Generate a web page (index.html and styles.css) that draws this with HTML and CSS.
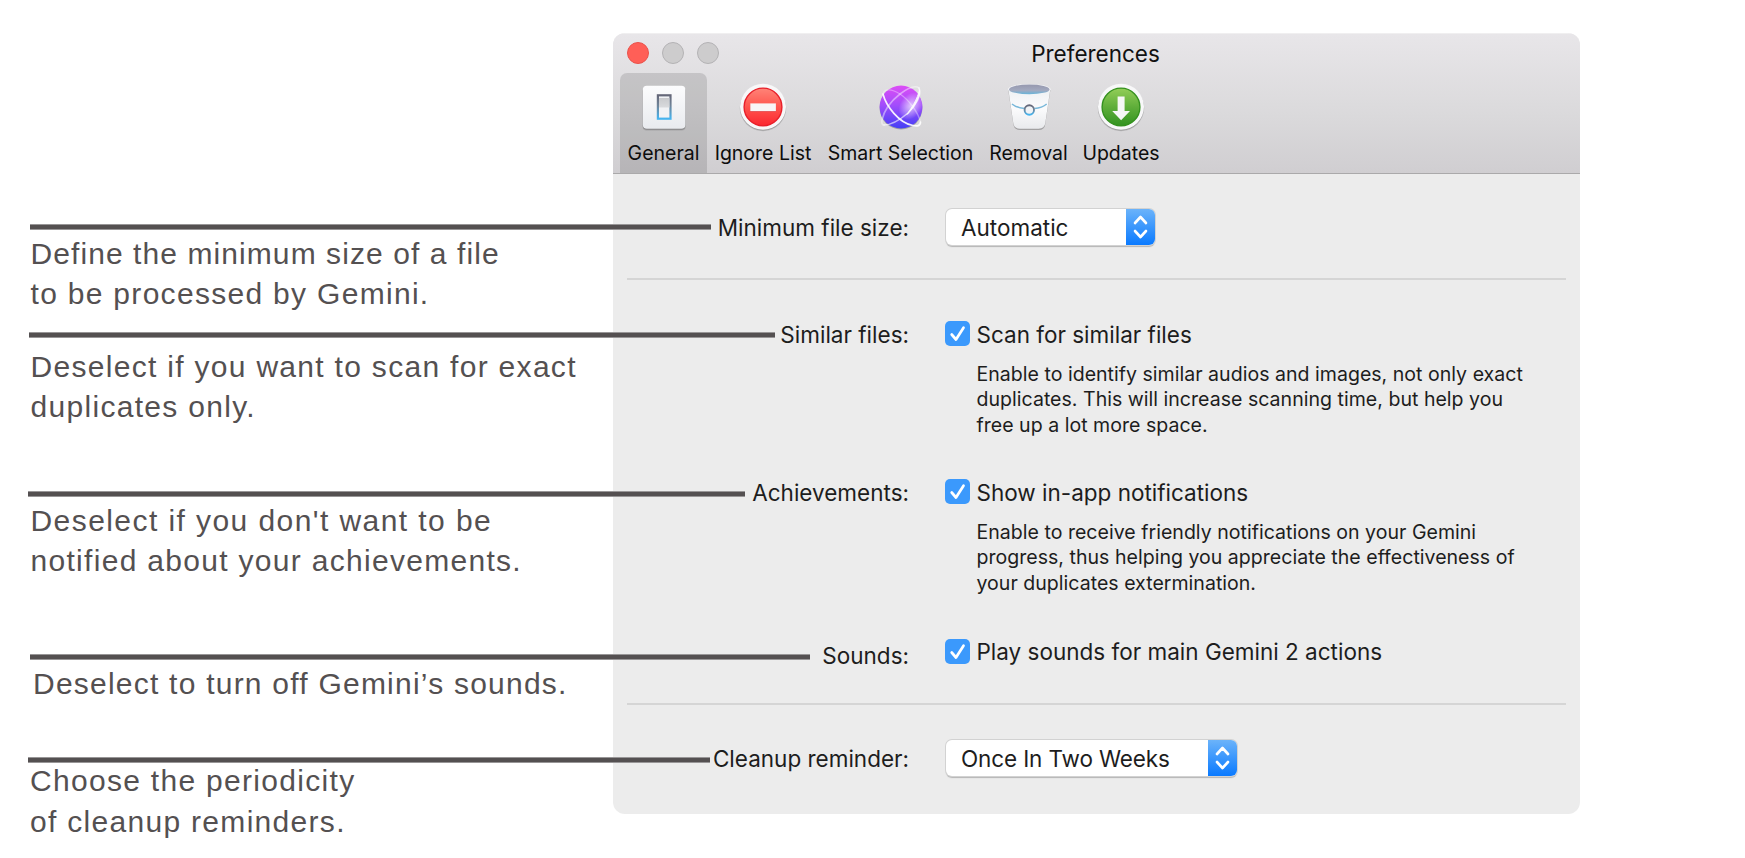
FILE: index.html
```html
<!DOCTYPE html>
<html lang="en">
<head>
<meta charset="utf-8">
<title>Preferences</title>
<link rel="stylesheet" href="styles.css">
</head>
<body>
<main class="stage">
  <aside class="callouts">
    <section class="callout"><div class="leader leader-size"></div><p class="note note-size"><span class="tight">Define the minimum size of a file</span><br>to be processed by Gemini.</p></section>
    <section class="callout"><div class="leader leader-similar"></div><p class="note note-similar">Deselect if you want to scan for exact<br>duplicates only.</p></section>
    <section class="callout"><div class="leader leader-achievements"></div><p class="note note-achievements"><span class="loose">Deselect if you don't want to be</span><br>notified about your achievements.</p></section>
    <section class="callout"><div class="leader leader-sounds"></div><p class="note note-sounds">Deselect to turn off Gemini’s sounds.</p></section>
    <section class="callout"><div class="leader leader-reminder"></div><p class="note note-reminder">Choose the periodicity<br>of cleanup reminders.</p></section>
  </aside>

  <div class="window">
    <header class="header">
      <div class="titlebar">
        <div class="lights"><i class="light close"></i><i class="light"></i><i class="light"></i></div>
        <h1 class="title">Preferences</h1>
      </div>
      <nav class="toolbar">
        <a class="tab tab-general active">
          <svg class="icon" viewBox="0 0 50 50">
            <defs>
              <linearGradient id="plate" x1="0" y1="0" x2="0" y2="1"><stop offset="0" stop-color="#fcfcfd"/><stop offset="1" stop-color="#e9ebef"/></linearGradient>
              <linearGradient id="rim" x1="0" y1="0" x2="0" y2="1"><stop offset="0" stop-color="#656778"/><stop offset=".45" stop-color="#6f8499"/><stop offset="1" stop-color="#45b4f0"/></linearGradient>
              <linearGradient id="rocker" x1="0" y1="0" x2="0" y2="1"><stop offset="0" stop-color="#c9cacd"/><stop offset="1" stop-color="#d9dadd"/></linearGradient>
            </defs>
            <rect x="3.6" y="5" width="43" height="43.6" rx="4" fill="#000" opacity=".13"/>
            <rect x="3.8" y="4.6" width="42.6" height="43" rx="4" fill="#000" opacity=".25"/>
            <rect x="3.8" y="3.7" width="42.6" height="43" rx="4" fill="url(#plate)"/>
            <rect x="18.9" y="13.3" width="12.6" height="23.4" fill="#f1f2f5" stroke="url(#rim)" stroke-width="2.2"/>
            <rect x="20" y="16" width="10.4" height="9.5" fill="url(#rocker)"/>
          </svg>
          <span class="tab-label">General</span>
        </a>
        <a class="tab tab-ignore">
          <svg class="icon" viewBox="0 0 50 50">
            <defs><linearGradient id="red" x1="0" y1="0" x2="0" y2="1"><stop offset="0" stop-color="#ff8478"/><stop offset=".5" stop-color="#ff544d"/><stop offset="1" stop-color="#fb2730"/></linearGradient></defs>
            <circle cx="25" cy="25.9" r="23.3" fill="#000" opacity=".12"/>
            <circle cx="25" cy="25.5" r="22.9" fill="#000" opacity=".22"/>
            <circle cx="25" cy="24.7" r="23" fill="#f8f8f9"/>
            <circle cx="25" cy="25" r="18.9" fill="url(#red)" stroke="#e8202b" stroke-width="1.4"/>
            <rect x="12.3" y="22" width="25.6" height="8" fill="#c8202a" opacity=".5"/>
            <rect x="12.3" y="21.4" width="25.6" height="7.8" fill="#f8f5f6"/>
          </svg>
          <span class="tab-label">Ignore List</span>
        </a>
        <a class="tab tab-smart">
          <svg class="icon" viewBox="0 0 50 50">
            <defs>
              <linearGradient id="orb" x1="0" y1="0" x2="0" y2="1"><stop offset="0" stop-color="#dd4df6"/><stop offset=".45" stop-color="#a34dfb"/><stop offset="1" stop-color="#443ff5"/></linearGradient>
              <radialGradient id="glow"><stop offset="0" stop-color="#fff" stop-opacity=".85"/><stop offset="1" stop-color="#fff" stop-opacity="0"/></radialGradient>
              <clipPath id="orbclip"><circle cx="25" cy="25" r="21.4"/></clipPath>
            </defs>
            <circle cx="25" cy="26" r="21.4" fill="#000" opacity=".25"/>
            <circle cx="25" cy="25" r="21.4" fill="url(#orb)"/>
            <g clip-path="url(#orbclip)"><ellipse cx="35" cy="24" rx="11" ry="15" transform="rotate(35 35 24)" fill="url(#glow)" opacity=".8"/></g>
            <g fill="none" stroke="#fff" stroke-linecap="round">
              <path d="M7 12 C10 24 23 41 37 43.500 C41 44.500 44.500 44 44.500 40" stroke-width="1.7" opacity=".9"/>
              <path d="M7 12 C8 6 16 7 24 12 C33 18 42 30 44.500 40" stroke-width="1.4" opacity=".35"/>
              <path d="M43 6 C46 13 40 23 32 31 C25 37 16 43 8 43" stroke-width="1.6" opacity=".6"/>
              <path d="M43 6 C39 3 32 6 24 12 C15 19 8 29 6 38 C5.500 41 6 43 8 43" stroke-width="1.6" opacity=".45"/>
              <path d="M43.500 8 C44.500 15 38.500 25 31 32.500 C36 25 41 18 43.500 8Z" fill="#fff" stroke-width="1" opacity=".85"/>
            </g>
          </svg>
          <span class="tab-label">Smart Selection</span>
        </a>
        <a class="tab tab-removal">
          <svg class="icon" viewBox="0 0 50 50">
            <defs>
              <linearGradient id="bin" x1="0" y1="0" x2="0" y2="1"><stop offset="0" stop-color="#eef0f3"/><stop offset=".5" stop-color="#fbfbfc"/><stop offset="1" stop-color="#e9eaed"/></linearGradient>
              <linearGradient id="mouth" x1="0" y1="0" x2="0" y2="1"><stop offset="0" stop-color="#9698ae"/><stop offset=".6" stop-color="#a3a9bf"/><stop offset="1" stop-color="#67b4da"/></linearGradient>
            </defs>
            <path d="M4.200 8 L9.300 42 Q10 48 16 48 H34.600 Q40.600 48 41.300 42 L46.400 8Z" fill="#000" opacity=".25"/>
            <path d="M4.200 6.500 L9.300 41 Q10 46.700 16 46.700 H34.600 Q40.600 46.700 41.300 41 L46.400 6.500Z" fill="url(#bin)"/>
            <ellipse cx="25.300" cy="7.200" rx="21.200" ry="5.300" fill="#f3f4f7"/>
            <ellipse cx="25.300" cy="7.400" rx="20.200" ry="4.900" fill="url(#mouth)"/>
            <path d="M8 22 Q13 26 20.500 26.500 M30.500 26.500 Q38 26 42.700 22" fill="none" stroke="#79b8da" stroke-width="1.6"/>
            <circle cx="25.300" cy="28" r="4.700" fill="#f1f3f6" stroke="url(#rim)" stroke-width="1.900"/>
          </svg>
          <span class="tab-label">Removal</span>
        </a>
        <a class="tab tab-updates">
          <svg class="icon" viewBox="0 0 50 50">
            <defs><linearGradient id="green" x1="0" y1="0" x2="0" y2="1"><stop offset="0" stop-color="#93ce58"/><stop offset=".5" stop-color="#5fae3a"/><stop offset="1" stop-color="#329320"/></linearGradient></defs>
            <circle cx="25" cy="25.9" r="23.3" fill="#000" opacity=".12"/>
            <circle cx="25" cy="25.5" r="22.9" fill="#000" opacity=".22"/>
            <circle cx="25" cy="24.7" r="23" fill="#f8f8f9"/>
            <circle cx="25" cy="25" r="18.9" fill="url(#green)" stroke="#35911f" stroke-width="1.4"/>
            <path d="M21.600 14.400H28.600V29H34L25.100 38.200L16.200 29H21.600Z" fill="#f6f7f6"/>
          </svg>
          <span class="tab-label">Updates</span>
        </a>
      </nav>
    </header>

    <div class="content">
      <div class="row row-size">
        <span class="row-label select-label">Minimum file size:</span>
        <div class="select select-size"><span class="select-value">Automatic</span><span class="stepper"><svg class="arrows" viewBox="0 0 29 36"><path d="M9 14 L14.500 8 L20 14 M9 22 L14.500 28 L20 22"/></svg></span></div>
      </div>
      <hr class="rule rule-top">
      <div class="row row-similar">
        <span class="row-label">Similar files:</span>
        <div class="option">
          <div class="choice"><span class="checkbox"><svg class="tick" viewBox="0 0 25 25"><path d="M6.700 13.500 L11 18.500 L18.500 6.700"/></svg></span><span>Scan for similar files</span></div>
          <p class="hint">Enable to identify similar audios and images, not only exact<br>duplicates. This will increase scanning time, but help you<br>free up a lot more space.</p>
        </div>
      </div>
      <div class="row row-achievements">
        <span class="row-label">Achievements:</span>
        <div class="option">
          <div class="choice"><span class="checkbox"><svg class="tick" viewBox="0 0 25 25"><path d="M6.700 13.500 L11 18.500 L18.500 6.700"/></svg></span><span>Show in-app notifications</span></div>
          <p class="hint">Enable to receive friendly notifications on your Gemini<br>progress, thus helping you appreciate the effectiveness of<br>your duplicates extermination.</p>
        </div>
      </div>
      <div class="row row-sounds">
        <span class="row-label sounds-label">Sounds:</span>
        <div class="option">
          <div class="choice"><span class="checkbox"><svg class="tick" viewBox="0 0 25 25"><path d="M6.700 13.500 L11 18.500 L18.500 6.700"/></svg></span><span class="sounds-text">Play sounds for main Gemini 2 actions</span></div>
        </div>
      </div>
      <hr class="rule rule-bottom">
      <div class="row row-reminder">
        <span class="row-label select-label">Cleanup reminder:</span>
        <div class="select select-reminder"><span class="select-value">Once In Two Weeks</span><span class="stepper"><svg class="arrows" viewBox="0 0 29 36"><path d="M9 14 L14.500 8 L20 14 M9 22 L14.500 28 L20 22"/></svg></span></div>
      </div>
    </div>
  </div>
</main>
</body>
</html>
```
FILE: styles.css
```css
* { box-sizing: border-box; }
body { margin: 0; background: #fff; color: #1d1d1d; font-family: Inter, Roboto, sans-serif; }
p, h1 { margin: 0; }

.stage { display: flex; width: 1745px; height: 858px; overflow: hidden; }

/* Left-hand notes with leader lines running into the window */
.callouts {
  position: relative; z-index: 1; width: 613px; flex: none; padding-top: 224px;
  display: grid; grid-template-rows: 108px 159px 163px 103px 101px;
  font-family: "Liberation Sans", Arial, sans-serif; color: #545051;
}
.leader { height: 6px; background: #545051; border: solid #989697; border-width: 1px 0; }
.leader-size { width: 681px; margin-left: 30px; }
.leader-similar { width: 746px; margin-left: 29px; }
.leader-achievements { width: 717px; margin-left: 28px; }
.leader-sounds { width: 780px; margin-left: 30px; }
.leader-reminder { width: 682px; margin-left: 28px; }
.note { padding-left: 30.500px; font-size: 30px; line-height: 40px; letter-spacing: 1.300px; white-space: nowrap; }
.tight { letter-spacing: 1.080px; }
.loose { letter-spacing: 1.430px; }
.note-size { margin-top: 4px; }
.note-similar { margin-top: 9px; }
.note-achievements { margin-top: 4px; }
.note-sounds { margin-top: 4px; padding-left: 33px; letter-spacing: 1.230px; }
.note-reminder { margin-top: -3px; padding-left: 30px; line-height: 41px; }

/* Window */
.window { width: 967px; height: 781px; margin-top: 33px; flex: none; border-radius: 12px; overflow: hidden; background: #ececec; }
.header { height: 141px; border-bottom: 1px solid #aaa9aa; border-top: 1px solid #f0eff0; background: linear-gradient(#e8e6e9, #dad9db 60%, #d0ced1); }
.titlebar { display: grid; grid-template-columns: 1fr auto 1fr; height: 39px; }
.lights { display: flex; gap: 13px; padding: 8px 0 0 14px; }
.light { width: 22px; height: 22px; border-radius: 50%; background: #cdcccd; border: 1px solid #b3b2b4; }
.close { background: #ff5f57; border-color: #e9524b; }
.title { padding-right: 2px; font-size: 22.500px; font-weight: 400; line-height: 39px; color: #111; }
.toolbar { display: flex; padding-left: 7px; }
.tab { display: flex; flex-direction: column; align-items: center; height: 100px; padding-top: 9px; }
.tab-general { width: 87px; }
.tab-ignore { width: 112px; }
.tab-smart { width: 163px; }
.tab-removal { width: 93px; }
.tab-updates { width: 92px; }
.active { background: rgba(0, 0, 0, .12); border-radius: 7px 7px 0 0; }
.icon { width: 50px; height: 50px; display: block; }
.tab-label { margin-top: 8px; font-size: 19.500px; line-height: 26px; color: #0d0d0d; }

/* Settings */
.content { padding-top: 35px; font-size: 22.500px; line-height: 27px; white-space: nowrap; }
.row { display: grid; grid-template-columns: 296px 1fr; column-gap: 36px; }
.row-label { text-align: right; }
.select-label { line-height: 37px; }
.row-similar { margin-top: 41px; }
.row-achievements { margin-top: 41.500px; }
.row-sounds { margin-top: 43.500px; }
.row-reminder { margin-top: 35px; }
.sounds-label { padding-top: 3px; }
.sounds-text { line-height: 25px; }
.rule { height: 2px; margin: 0 14px; border: 0; background: #d5d5d5; }
.rule-top { margin-top: 32px; }
.rule-bottom { margin-top: 34px; }
.select { display: flex; height: 36px; margin-left: 1px; background: #fff; border-radius: 6px; box-shadow: 0 0 0 1px #d2d2d2, 0 1.500px 1px #b5b5b5; overflow: hidden; line-height: 37px; }
.select-size { width: 209px; }
.select-reminder { width: 291px; }
.select-value { flex: 1; padding-left: 15px; }
.select-reminder .select-value { letter-spacing: -.120px; }
.stepper { width: 29px; background: linear-gradient(#6bb3fa, #0a7aff); }
.arrows { display: block; width: 29px; height: 36px; fill: none; stroke: #fff; stroke-width: 2.600; stroke-linecap: round; stroke-linejoin: round; }
.choice { display: flex; gap: 6.500px; }
.checkbox { width: 25px; height: 25px; border-radius: 5px; background: #3b99fc; }
.tick { display: block; width: 25px; height: 25px; fill: none; stroke: #fff; stroke-width: 2.700; stroke-linecap: round; stroke-linejoin: round; }
.hint { margin-top: 13.500px; padding-left: 31.500px; margin-bottom: -.500px; font-size: 19.550px; letter-spacing: .020px; line-height: 25.500px; }
```
